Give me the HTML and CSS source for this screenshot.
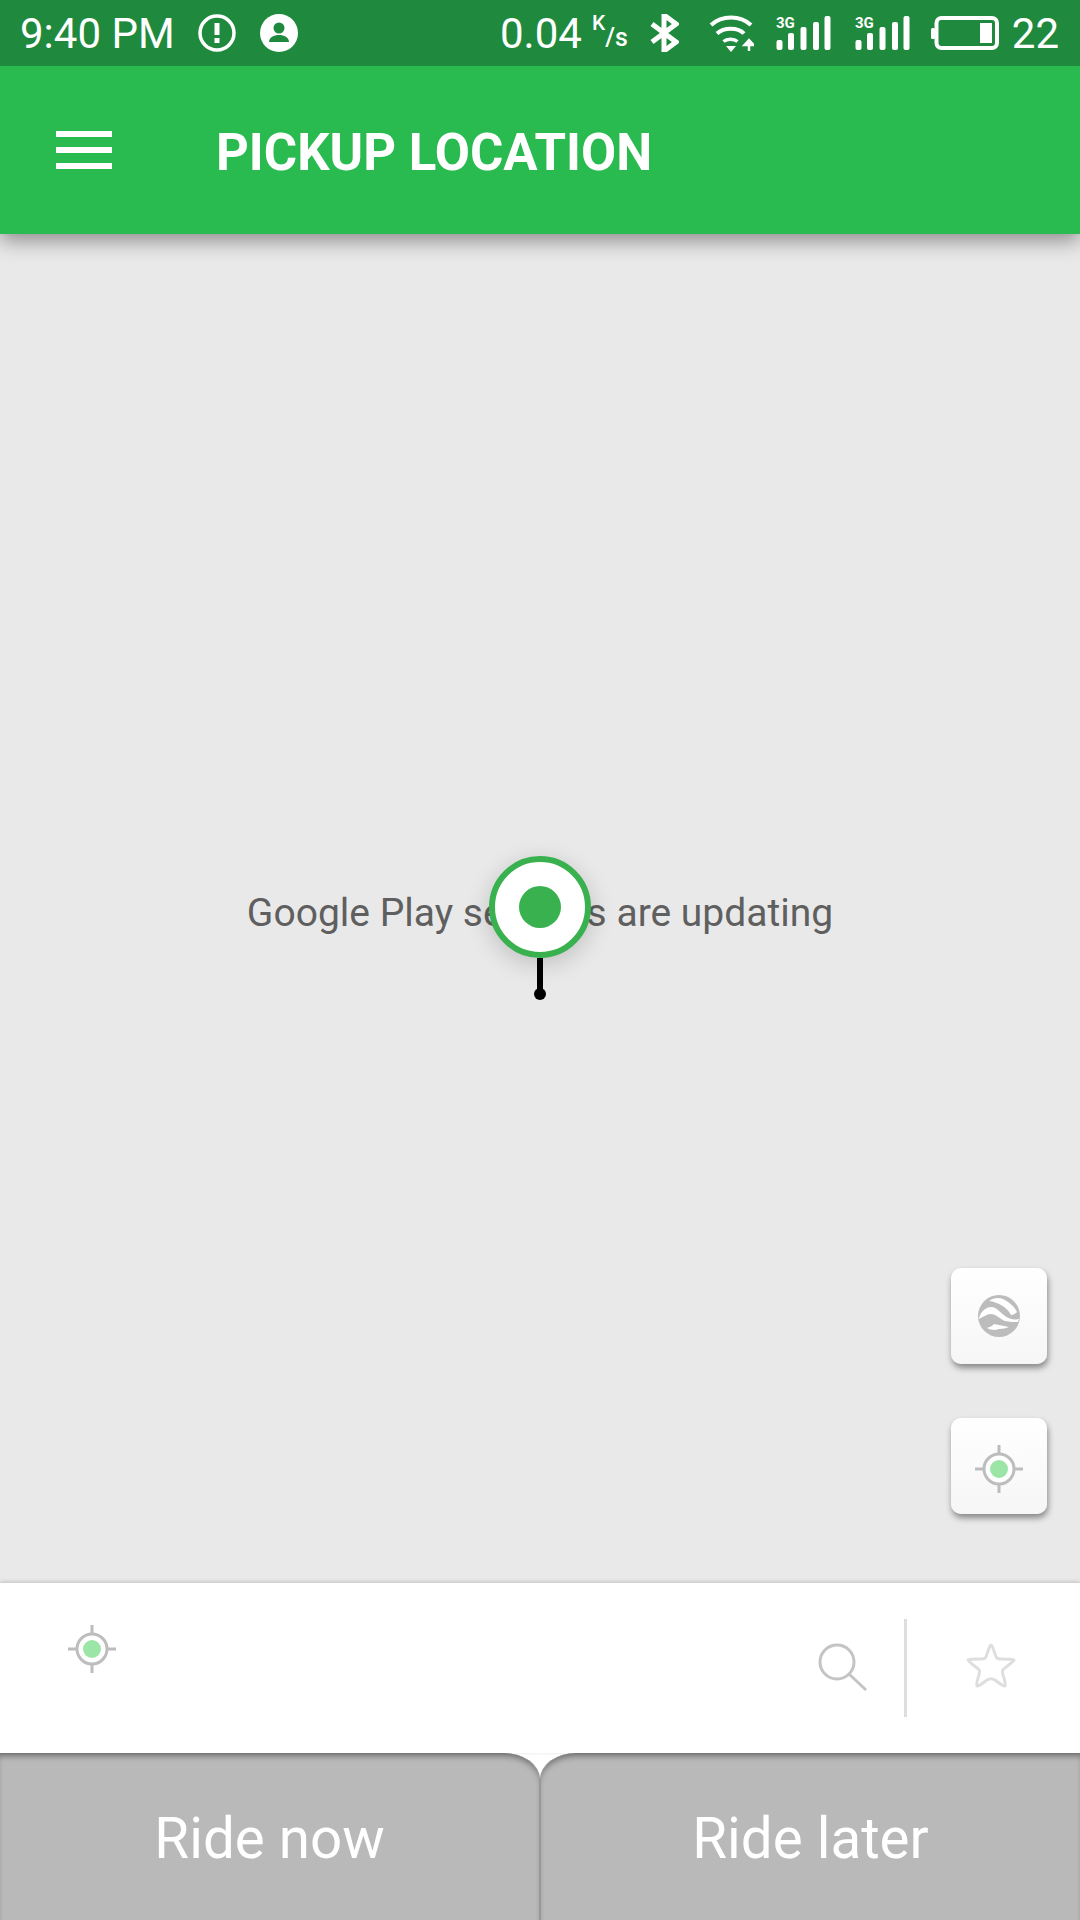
FILE: index.html
```html
<!DOCTYPE html>
<html lang="en">
<head>
  <meta charset="UTF-8">
  <meta name="viewport" content="width=device-width, initial-scale=1.0">
  <title>Pickup Location</title>
  <link rel="stylesheet" href="styles.css">
</head>
<body>
  <div class="status-bar">
    <div class="status-group">
      <span class="status-time">9:40 PM</span>
      <svg class="status-icon" width="38" height="38" viewBox="0 0 38 38">
        <circle cx="19" cy="19" r="17" fill="none" stroke="#fff" stroke-width="3.5"/>
        <rect x="16.5" y="9" width="5" height="12" fill="#fff"/>
        <rect x="16.5" y="24" width="5" height="5" fill="#fff"/>
      </svg>
      <svg class="status-icon" width="38" height="38" viewBox="0 0 38 38">
        <circle cx="19" cy="19" r="19" fill="#fff"/>
        <circle cx="19" cy="14" r="5.5" fill="#1f8a3d"/>
        <path d="M9 28c0-4.5 5-7 10-7s10 2.500 10 7z" fill="#1f8a3d"/>
      </svg>
    </div>
    <div class="status-group">
      <span class="status-speed">0.04<span class="speed-unit"><span class="speed-k">K</span><span class="speed-s">/s</span></span></span>
      <svg class="status-icon icon-bt" width="29" height="38" viewBox="0 0 29 38" fill="none" stroke="#fff" stroke-width="5">
        <path d="M2 10l24 18-12 9V1l12 9-24 18"/>
      </svg>
      <svg class="status-icon icon-wifi" width="45" height="38" viewBox="0 0 45 38" fill="none" stroke="#fff">
        <path d="M2 11C13 1 31 1 42 11" stroke-width="4"/>
        <path d="M8 19.500C15 13 29 13 35 19.500" stroke-width="4"/>
        <path d="M14.500 27.500C18 24.500 25 24.500 28.500 27.500" stroke-width="3.500"/>
        <path d="M17 32h10l-5 6z" fill="#fff" stroke="none"/>
        <path d="M40 37V29M35.500 31l4.500-5 4.500 5z" fill="#fff" stroke-width="2.500"/>
      </svg>
      <svg class="status-icon" width="55" height="38" viewBox="0 -2 55 38">
        <text class="signal-label" x="0" y="12">3G</text>
        <rect x="0.500" y="24" width="6" height="10" rx="2" fill="#fff"/>
        <rect x="12" y="17" width="6" height="17" rx="2" fill="#fff"/>
        <rect x="24.500" y="11" width="6" height="23" rx="2" fill="#fff"/>
        <rect x="37" y="6" width="6" height="28" rx="2" fill="#fff"/>
        <rect x="48.500" y="0" width="6" height="34" rx="2" fill="#fff"/>
      </svg>
      <svg class="status-icon" width="55" height="38" viewBox="0 -2 55 38">
        <text class="signal-label" x="0" y="12">3G</text>
        <rect x="0.500" y="24" width="6" height="10" rx="2" fill="#fff"/>
        <rect x="12" y="17" width="6" height="17" rx="2" fill="#fff"/>
        <rect x="24.500" y="11" width="6" height="23" rx="2" fill="#fff"/>
        <rect x="37" y="6" width="6" height="28" rx="2" fill="#fff"/>
        <rect x="48.500" y="0" width="6" height="34" rx="2" fill="#fff"/>
      </svg>
      <svg class="status-icon icon-battery" width="68" height="34" viewBox="0 0 68 34">
        <rect x="0" y="12" width="4" height="11" rx="1.500" fill="#fff"/>
        <rect x="5.500" y="2" width="60.500" height="30" rx="5" fill="none" stroke="#fff" stroke-width="4"/>
        <rect x="49" y="7" width="12" height="20" fill="#fff"/>
      </svg>
      <span class="status-level">22</span>
    </div>
  </div>

  <header class="app-bar">
    <div class="menu-icon"><span></span><span></span><span></span></div>
    <h1>PICKUP LOCATION</h1>
  </header>

  <main class="map">
    <p class="map-message">Google Play services are updating</p>

    <div class="pin">
      <div class="pin-head"><div class="pin-core"></div></div>
      <div class="pin-stem"></div>
      <div class="pin-foot"></div>
    </div>

    <div class="map-controls">
      <button class="map-button">
        <svg width="42" height="42" viewBox="0 0 42 42">
          <circle cx="21" cy="21" r="21" fill="#bcbcbc"/>
          <path d="M11 6C15 3 20 2 25 4c6 3 11 7 14 13-2 2-4 3-6 3C30 13 20 7 11 6z" fill="#fff"/>
          <path d="M1 23C3 16 8 12 13 12c5 0 9 5 14 9 4 3 9 4 14 3 0 1-1 2-1 3-4 0-8 0-13-1-5-2-9-7-14-7-3 0-7 2-12 5z" fill="#fff"/>
          <path d="M9 33l5-2 2-2c5 1 10 2 15 3-3 1-6 2-10 2l-4 1c-3 0-6-1-8-2z" fill="#fff"/>
        </svg>
      </button>
      <button class="map-button">
        <svg class="map-target" width="48" height="48" viewBox="0 0 48 48">
          <use href="#target"/>
        </svg>
      </button>
    </div>
  </main>

  <section class="address-panel">
    <svg class="address-target" width="48" height="48" viewBox="0 0 48 48">
      <g id="target">
        <circle cx="24" cy="24" r="15" fill="#fff" stroke="#bdbdbd" stroke-width="3"/>
        <circle cx="24" cy="24" r="9" fill="#9be6a6"/>
        <path d="M24 0v8M24 40v8M0 24h8M40 24h8" stroke="#bdbdbd" stroke-width="3"/>
      </g>
    </svg>
    <svg class="address-search" width="50" height="50" viewBox="0 0 50 50" fill="none" stroke="#c4c4c4" stroke-width="3">
      <circle cx="19" cy="19" r="17"/>
      <path d="M31 31l17 16"/>
    </svg>
    <div class="address-divider"></div>
    <svg class="address-star" width="50" height="46" viewBox="0 0 50 46" fill="none" stroke="#dedede" stroke-width="3" stroke-linejoin="round">
      <path d="M25 2c1 0 2 3 4 9 1 4 2 5 6 5 8 0 12 0 13 1 0 1-3 3-9 8-3 2-3 3-2 7 2 6 3 10 2 11-1 0-5-2-10-6-3-2-5-2-8 0-5 4-9 6-10 6-1-1 0-5 2-11 1-4 1-5-2-7-6-5-9-7-9-8 1-1 5-1 13-1 4 0 5-1 6-5 2-6 3-9 4-9z"/>
    </svg>
  </section>

  <nav class="ride-actions">
    <button class="ride-button ride-now">Ride now</button>
    <button class="ride-button ride-later">Ride later</button>
  </nav>
</body>
</html>
```

FILE: styles.css
```css
html, body {
  height: 100%;
}

body {
  margin: 0;
  display: flex;
  flex-direction: column;
  height: 1920px;
  font-family: Roboto, "Liberation Sans", sans-serif;
  background: #fff;
  overflow: hidden;
}

.status-bar {
  position: relative;
  z-index: 3;
  height: 66px;
  flex: none;
  display: flex;
  justify-content: space-between;
  align-items: center;
  padding: 0 21px 0 20px;
  background: #1f8a3d;
  color: #fff;
  font-size: 42px;
}

.status-group {
  display: flex;
  align-items: center;
  gap: 24px;
}

.status-time {
  margin-right: -1px;
}

.status-speed {
  display: flex;
  align-items: center;
  margin-right: -2px;
}

.speed-unit {
  margin-left: 10px;
  display: flex;
  align-items: flex-start;
  font-weight: 500;
}

.speed-k {
  font-size: 21px;
  line-height: 20px;
  margin-top: -1px;
}

.speed-s {
  font-size: 25px;
  line-height: 28px;
  margin-top: 10px;
  margin-left: 0;
}

.icon-bt {
  margin-right: 6px;
}

.icon-wifi {
  margin-right: -2px;
}

.icon-battery {
  margin-left: -3px;
  margin-right: -11px;
}

.signal-label {
  font-family: Roboto, sans-serif;
  font-size: 15px;
  font-weight: 700;
  fill: #fff;
}

.app-bar {
  position: relative;
  z-index: 2;
  height: 168px;
  flex: none;
  display: flex;
  align-items: center;
  padding-left: 56px;
  background: #2abb50;
  box-shadow: 0 6px 20px rgba(0, 0, 0, 0.42);
  color: #fff;
}

.app-bar h1 {
  margin: 4px 0 0 104px;
  font-size: 51px;
  font-weight: 700;
}

.menu-icon {
  width: 56px;
  display: flex;
  flex-direction: column;
  gap: 10px;
}

.menu-icon span {
  height: 6px;
  background: #fff;
}

.map {
  position: relative;
  flex: 1;
  display: flex;
  align-items: center;
  justify-content: center;
  background: #e9e9e9;
}

.map-message {
  margin: 8px 0 0 0;
  font-size: 39px;
  color: #5f5f5f;
}

.pin {
  position: absolute;
  left: 489px;
  top: 622px;
  display: flex;
  flex-direction: column;
  align-items: center;
  width: 102px;
}

.pin-head {
  box-sizing: border-box;
  width: 102px;
  height: 102px;
  display: flex;
  align-items: center;
  justify-content: center;
  border: 6px solid #39b14f;
  border-radius: 50%;
  background: #fff;
  box-shadow: 0 6px 24px rgba(0, 0, 0, 0.18);
}

.pin-core {
  width: 42px;
  height: 42px;
  border-radius: 50%;
  background: #39b14f;
}

.pin-stem {
  width: 6px;
  height: 33px;
  background: #000;
}

.pin-foot {
  width: 12px;
  height: 12px;
  margin-top: -3px;
  border-radius: 50%;
  background: #000;
}

.map-controls {
  position: absolute;
  right: 33px;
  bottom: 69px;
  display: flex;
  flex-direction: column;
  gap: 54px;
}

.map-button {
  width: 96px;
  height: 96px;
  padding: 0;
  display: flex;
  align-items: center;
  justify-content: center;
  border: none;
  border-radius: 10px;
  background: linear-gradient(#fff, #f6f6f6);
  box-shadow: 1px 4px 6px rgba(0, 0, 0, 0.42);
}

.map-target {
  margin-top: 6px;
}

.address-panel {
  height: 170px;
  flex: none;
  display: flex;
  align-items: flex-start;
  background: #fff;
  box-shadow: 0 -1px 4px rgba(0, 0, 0, 0.18);
  position: relative;
}

.address-target {
  margin: 42px 0 0 68px;
}

.address-search {
  margin: 60px 0 0 auto;
}

.address-divider {
  width: 3px;
  height: 98px;
  margin: 36px 0 0 36px;
  background: #dedede;
}

.address-star {
  margin: 60px 64px 0 59px;
}

.ride-actions {
  height: 167px;
  flex: none;
  display: flex;
  background: #fff;
}

.ride-button {
  flex: 1;
  padding: 4px 0 0 0;
  border: none;
  background: #b9b9b9;
  box-shadow: inset 0 6px 6px -3px rgba(0, 0, 0, 0.4);
  color: #fff;
  font-family: inherit;
  font-size: 56.5px;
}

.ride-now {
  border-right: 1px solid #999;
  border-top-right-radius: 36px 26px;
}

.ride-later {
  border-left: 1px solid #999;
  border-top-left-radius: 36px 26px;
}
```
